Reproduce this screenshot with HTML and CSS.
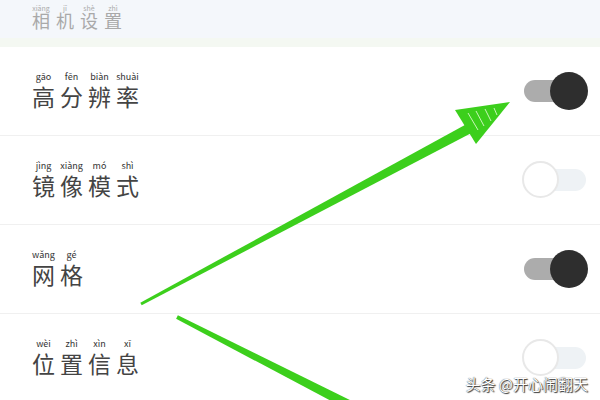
FILE: index.html
```html
<!DOCTYPE html>
<html lang="zh">
<head>
  <meta charset="UTF-8" />
  <title>相机设置</title>
  <link rel="stylesheet" href="styles.css">
</head>
<body>
  <div class="page">
    <div class="header">
      <ruby>相<rt>xiāng</rt></ruby><ruby>机<rt>jī</rt></ruby><ruby>设<rt>shè</rt></ruby><ruby>置<rt>zhì</rt></ruby>
    </div>
    <div class="band"></div>

    <div class="list">
      <div class="row">
        <div class="label">
          <ruby>高<rt>gāo</rt></ruby><ruby>分<rt>fēn</rt></ruby><ruby>辨<rt>biàn</rt></ruby><ruby>率<rt>shuài</rt></ruby>
        </div>
        <div class="switch on"><span class="track"></span><span class="knob"></span></div>
      </div>
      <div class="row">
        <div class="label">
          <ruby>镜<rt>jìng</rt></ruby><ruby>像<rt>xiàng</rt></ruby><ruby>模<rt>mó</rt></ruby><ruby>式<rt>shì</rt></ruby>
        </div>
        <div class="switch"><span class="track"></span><span class="knob"></span></div>
      </div>
      <div class="row">
        <div class="label">
          <ruby>网<rt>wǎng</rt></ruby><ruby>格<rt>gé</rt></ruby>
        </div>
        <div class="switch on"><span class="track"></span><span class="knob"></span></div>
      </div>
      <div class="row">
        <div class="label">
          <ruby>位<rt>wèi</rt></ruby><ruby>置<rt>zhì</rt></ruby><ruby>信<rt>xìn</rt></ruby><ruby>息<rt>xī</rt></ruby>
        </div>
        <div class="switch"><span class="track"></span><span class="knob"></span></div>
      </div>
    </div>

    <!-- hand-drawn arrows on top of the screenshot -->
    <svg class="marks" width="600" height="400" viewBox="0 0 600 400">
      <polygon points="140.3,302.7 467.6,123.6 472.4,132.4 141.7,305.3" fill="#3ccf1c"/>
      <polygon points="455,110 510,102 476,144" fill="#3ccf1c"/>
      <g stroke="#c9f5b8" stroke-width="1">
        <line x1="468" y1="113" x2="478" y2="130"/>
        <line x1="476" y1="111" x2="484" y2="126"/>
        <line x1="485" y1="109" x2="491" y2="121"/>
        <line x1="494" y1="108" x2="497" y2="115"/>
      </g>
      <polygon points="176.1,318.8 177.9,315.2 360,405 352,412" fill="#3ccf1c"/>
    </svg>

    <div class="watermark">头条 @开心闹翻天</div>
  </div>
</body>
</html>
```

FILE: styles.css
```css
* { box-sizing: border-box; }

body {
  margin: 0;
  font-family: "Noto Sans CJK SC", "Noto Sans", sans-serif;
  background: white;
}

.page {
  position: relative;
  width: 600px;
  height: 400px;
  overflow: hidden;
}

.header {
  height: 38px;
  background: #f4f7fb;
  padding: 11px 0 0 32px;
  font-size: 18px;
  line-height: 1;
  color: #a9a9a9;
}

.header ruby {
  margin-right: 6px;
}

.header rt {
  font-size: 7px;
  color: #aaa;
}

.band {
  height: 9px;
  background: #f4f8f2;
}

.row {
  height: 89px;
  display: flex;
  align-items: center;
  justify-content: space-between;
  padding: 0 12px 0 32px;
  border-bottom: 1px solid #f0f0f0;
}

.label {
  font-size: 23px;
  line-height: 1;
  color: #444;
  padding-bottom: 4px;
}

.label ruby {
  margin-right: 5px;
}

.label rt {
  font-size: 9px;
  color: #333;
  padding-bottom: 2px;
}

.switch {
  position: relative;
  width: 66px;
  height: 38px;
}

.track {
  position: absolute;
  left: 2px;
  right: 2px;
  top: 8px;
  height: 22px;
  border-radius: 11px;
  background: #eef2f5;
}

.knob {
  position: absolute;
  top: 0;
  left: 0;
  width: 37px;
  height: 37px;
  border-radius: 50%;
  background: white;
  border: 2px solid #e8e8e8;
}

.switch.on .track {
  background: #acacac;
}

.switch.on .knob {
  left: auto;
  right: 0;
  width: 38px;
  height: 38px;
  background: #2e2e2e;
  border: none;
}

.marks {
  position: absolute;
  top: 0;
  left: 0;
  pointer-events: none;
}

.watermark {
  position: absolute;
  right: 12px;
  bottom: 6px;
  font-size: 15px;
  color: white;
  text-shadow: 0 0 1px #222, 1px 1px 1px #333;
}
```
